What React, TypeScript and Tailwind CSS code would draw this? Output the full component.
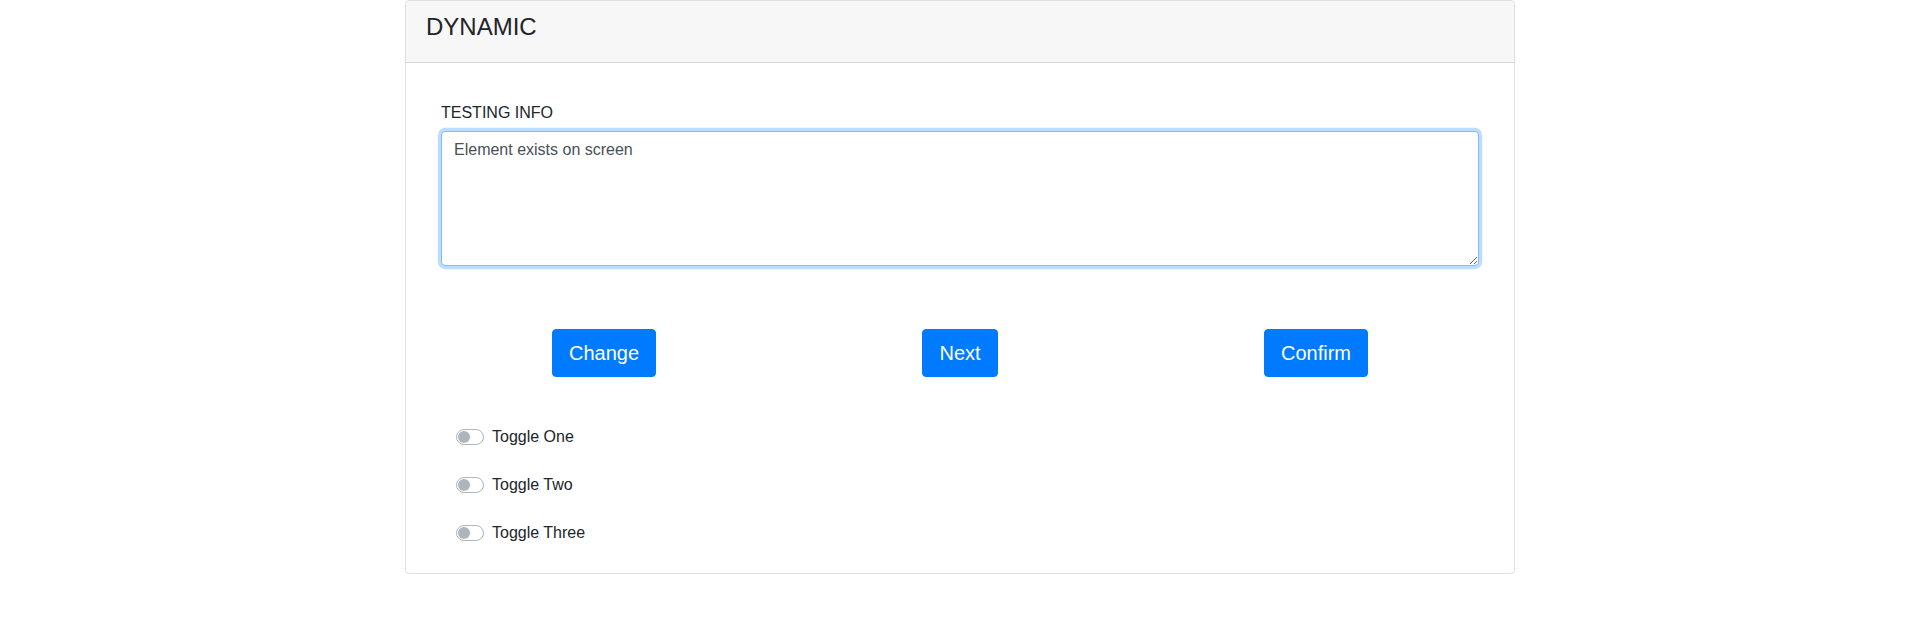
import React from "react";

const toggles = ["Toggle One", "Toggle Two", "Toggle Three"];
const buttons = ["Change", "Next", "Confirm"];

const Switch = ({ label }: { label: string }) => {
  return (
    <label className="flex items-center h-6 text-[16px] leading-6 text-[#212529]">
      <span className="relative w-[28px] h-4 rounded-lg border border-[#adb5bd] bg-white mr-2 shrink-0">
        <span className="absolute left-[1px] top-[1px] w-3 h-3 rounded-full bg-[#adb5bd]" />
      </span>
      {label}
    </label>
  );
};

const App = () => {
  return (
    <div
      className="w-full min-h-[622px] bg-white"
      style={{ fontFamily: '"Liberation Sans", Arial, sans-serif' }}
    >
      <div className="w-[1110px] mx-auto border border-[rgba(0,0,0,0.125)] rounded">
        <div className="bg-[#f7f7f7] border-b border-[rgba(0,0,0,0.125)] px-5 pt-3 pb-3 rounded-t">
          <h4 className="text-[24px] leading-[1.2] mb-2 text-[#212529]">DYNAMIC</h4>
        </div>
        <div className="px-5 pt-[38px] pb-5">
          <div className="px-[15px]">
            <label className="block text-[16px] leading-6 text-[#212529] mb-[6px]">
              TESTING INFO
            </label>
            <textarea
              className="block w-full h-[135px] border border-[#80bdff] rounded px-3 py-1.5 text-[16px] leading-6 text-[#495057] bg-white outline-none shadow-[0_0_0_0.2rem_rgba(0,123,255,0.25)]"
              defaultValue="Element exists on screen"
            />
          </div>
          <div className="grid grid-cols-3 mt-[63px]">
            {buttons.map((b) => (
              <div key={b} className="flex justify-center">
                <button className="h-12 px-4 rounded bg-[#007bff] border border-[#007bff] text-white text-[20px] leading-[30px]">
                  {b}
                </button>
              </div>
            ))}
          </div>
          <div className="flex flex-col gap-6 px-[30px] mt-12 pb-[8px]">
            {toggles.map((t) => (
              <Switch key={t} label={t} />
            ))}
          </div>
        </div>
      </div>
    </div>
  );
};

export default App;
